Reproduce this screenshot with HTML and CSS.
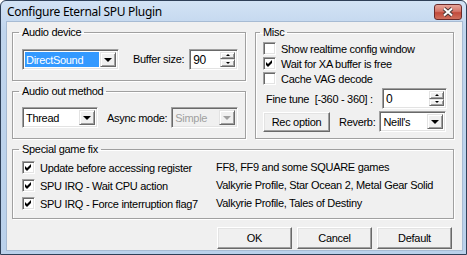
FILE: index.html
```html
<!DOCTYPE html>
<html lang="en">
<head>
    <meta charset="UTF-8">
    <title>Configure Eternal SPU Plugin</title>
    <link rel="stylesheet" href="styles.css">
</head>
<body>

<div class="window">
    <div class="titlebar">
        <span class="title">Configure Eternal SPU Plugin</span>
        <div class="close-btn">
            <svg width="14" height="10" viewBox="0 0 14 10">
                <path d="M3 1.5 L11 8.5 M11 1.5 L3 8.5" stroke="#4a3a3a" stroke-width="4"/>
                <path d="M3 1.5 L11 8.5 M11 1.5 L3 8.5" stroke="#fff" stroke-width="2"/>
            </svg>
        </div>
    </div>
    <div class="client">
        <div class="top">
            <div class="left-col">
                <fieldset class="group audio-device">
                    <legend>Audio device</legend>
                    <div class="row">
                        <div class="combo device-combo">
                            <span class="combo-text selected">DirectSound</span>
                            <span class="drop-btn"><i class="arrow"></i></span>
                        </div>
                        <span class="label buffer-label">Buffer size:</span>
                        <div class="edit buffer-edit">
                            <span class="edit-text">90</span>
                            <span class="spin">
                                <span class="spin-btn"><i class="up"></i></span>
                                <span class="spin-btn"><i class="down"></i></span>
                            </span>
                        </div>
                    </div>
                </fieldset>
                <fieldset class="group audio-out">
                    <legend>Audio out method</legend>
                    <div class="row">
                        <div class="combo thread-combo">
                            <span class="combo-text">Thread</span>
                            <span class="drop-btn"><i class="arrow"></i></span>
                        </div>
                        <span class="label async-label">Async mode:</span>
                        <div class="combo async-combo disabled">
                            <span class="combo-text">Simple</span>
                            <span class="drop-btn"><i class="arrow"></i></span>
                        </div>
                    </div>
                </fieldset>
            </div>
            <fieldset class="group misc">
                <legend>Misc</legend>
                <div class="check-row"><span class="check"></span>Show realtime config window</div>
                <div class="check-row"><span class="check checked"><svg width="7" height="7" viewBox="0 0 7 7"><path d="M0 2 L2 4 L6 0 L6 3 L2 7 L0 5 Z"/></svg></span>Wait for XA buffer is free</div>
                <div class="check-row"><span class="check"></span>Cache VAG decode</div>
                <div class="row tune-row">
                    <span class="label tune-label">Fine tune&nbsp; [-360 - 360] :</span>
                    <div class="edit tune-edit">
                        <span class="edit-text">0</span>
                        <span class="spin">
                            <span class="spin-btn"><i class="up"></i></span>
                            <span class="spin-btn"><i class="down"></i></span>
                        </span>
                    </div>
                </div>
                <div class="row rec-row">
                    <div class="btn rec-btn">Rec option</div>
                    <span class="label reverb-label">Reverb:</span>
                    <div class="combo reverb-combo">
                        <span class="combo-text">Neill's</span>
                        <span class="drop-btn"><i class="arrow"></i></span>
                    </div>
                </div>
            </fieldset>
        </div>
        <fieldset class="group special">
            <legend>Special game fix</legend>
            <div class="fix-grid">
                <div class="check-row"><span class="check checked"><svg width="7" height="7" viewBox="0 0 7 7"><path d="M0 2 L2 4 L6 0 L6 3 L2 7 L0 5 Z"/></svg></span>Update before accessing register</div>
                <div class="games">FF8, FF9 and some SQUARE games</div>
                <div class="check-row"><span class="check checked"><svg width="7" height="7" viewBox="0 0 7 7"><path d="M0 2 L2 4 L6 0 L6 3 L2 7 L0 5 Z"/></svg></span>SPU IRQ - Wait CPU action</div>
                <div class="games">Valkyrie Profile, Star Ocean 2, Metal Gear Solid</div>
                <div class="check-row"><span class="check checked"><svg width="7" height="7" viewBox="0 0 7 7"><path d="M0 2 L2 4 L6 0 L6 3 L2 7 L0 5 Z"/></svg></span>SPU IRQ - Force interruption flag7</div>
                <div class="games">Valkyrie Profile, Tales of Destiny</div>
            </div>
        </fieldset>
        <div class="buttons">
            <div class="btn">OK</div>
            <div class="btn">Cancel</div>
            <div class="btn">Default</div>
        </div>
    </div>
</div>

</body>
</html>
```

FILE: styles.css
```css
body {
    margin: 0;
    font-family: "Liberation Sans", Arial, sans-serif;
    font-size: 11px;
    letter-spacing: -0.3px;
    color: #000;
}
.window {
    width: 467px;
    height: 255px;
    box-sizing: border-box;
    border: 1px solid #2f4058;
    border-radius: 6px 6px 0 0;
    background: linear-gradient(#d3e3f5, #c0d5ed 30px, #bad1eb);
    padding: 0 3px 3px 5px;
    display: flex;
    flex-direction: column;
    overflow: hidden;
}
.titlebar {
    height: 20px;
    display: flex;
    align-items: center;
    justify-content: space-between;
    flex-shrink: 0;
}
.title {
    font-family: "Noto Sans", sans-serif;
    font-size: 12px;
    letter-spacing: -0.3px;
    padding-left: 1px;
    padding-top: 1px;
}
.close-btn {
    width: 26px;
    height: 14px;
    margin-right: 1px;
    margin-top: 2px;
    border: 1px solid #6b2a2a;
    border-radius: 3px;
    background: linear-gradient(#e7a499, #d5766a 45%, #c24a3c 55%, #d0705e);
    display: flex;
    align-items: center;
    justify-content: center;
}
.client {
    flex: 1;
    background: #f0f0f0;
    border: 1px solid #a7bbd3;
    padding: 4px 8px 0 5px;
}
.top {
    display: flex;
    gap: 9px;
}
.left-col {
    width: 234px;
    display: flex;
    flex-direction: column;
    gap: 4px;
}
fieldset.group {
    margin: 0;
    border: 1px solid #a0a0a0;
    box-shadow: inset 1px 1px #fff, 1px 1px #fff;
    padding: 9px 6px 10px 9px;
    min-width: 0;
}
legend {
    padding: 0 3px;
    margin-left: -3px;
    line-height: 13px;
}
.row {
    display: flex;
    align-items: center;
}
.label {
    white-space: nowrap;
}

/* sunken controls */
.combo, .edit {
    height: 21px;
    box-sizing: border-box;
    border: 1px solid;
    border-color: #a0a0a0 #fff #fff #a0a0a0;
    box-shadow: inset 1px 1px #696969, inset -1px -1px #e3e3e3;
    background: #fff;
    padding: 2px;
    display: flex;
}
.combo-text {
    flex: 1;
    padding-left: 1px;
    line-height: 17px;
}
.combo-text.selected {
    background: #3399ff;
    color: #fff;
    margin-right: 1px;
}
.drop-btn, .spin-btn {
    box-sizing: border-box;
    border: 1px solid;
    border-color: #e3e3e3 #696969 #696969 #e3e3e3;
    box-shadow: inset 1px 1px #fff, inset -1px -1px #a0a0a0;
    background: #f0f0f0;
    display: flex;
    align-items: center;
    justify-content: center;
}
.drop-btn {
    width: 16px;
}
.arrow {
    width: 0;
    height: 0;
    border-left: 4px solid transparent;
    border-right: 4px solid transparent;
    border-top: 4px solid #000;
    margin-top: 1px;
}
.disabled {
    background: #f0f0f0;
    color: #a0a0a0;
}
.disabled .arrow {
    border-top-color: #a0a0a0;
}
.edit-text {
    flex: 1;
    line-height: 17px;
    padding-left: 1px;
    font-size: 12px;
}
.spin {
    width: 15px;
    display: flex;
    flex-direction: column;
}
.spin-btn {
    flex: 1;
}
.up, .down {
    width: 0;
    height: 0;
    border-left: 2px solid transparent;
    border-right: 2px solid transparent;
}
.up {
    border-bottom: 2px solid #000;
}
.down {
    border-top: 2px solid #000;
}

.device-combo {
    width: 97px;
    margin-top: 1px;
}
.buffer-label {
    margin-left: 14px;
}
.buffer-edit {
    width: 49px;
    margin-left: 5px;
}
.thread-combo {
    width: 76px;
}
.async-label {
    margin-left: 9px;
}
.async-combo {
    width: 67px;
    margin-left: 4px;
}

/* checkboxes */
.check-row {
    display: flex;
    align-items: center;
    height: 15px;
    white-space: nowrap;
}
.check {
    width: 13px;
    height: 13px;
    box-sizing: border-box;
    border: 1px solid;
    border-color: #a0a0a0 #fff #fff #a0a0a0;
    box-shadow: inset 1px 1px #696969, inset -1px -1px #e3e3e3;
    background: #fff;
    margin-right: 5px;
    display: flex;
    align-items: center;
    justify-content: center;
    flex-shrink: 0;
}

fieldset.misc {
    flex: 1;
    padding: 2px 6px 5px 7px;
}
.tune-row {
    margin-top: 2px;
    justify-content: space-between;
    padding-left: 3px;
}
.tune-edit {
    width: 65px;
}
.rec-row {
    margin-top: 2px;
}
.btn {
    box-sizing: border-box;
    border: 1px solid;
    border-color: #fff #696969 #696969 #fff;
    box-shadow: inset -1px -1px #a0a0a0, inset 1px 1px #e3e3e3;
    background: #f0f0f0;
    display: flex;
    align-items: center;
    justify-content: center;
}
.rec-btn {
    width: 67px;
    height: 20px;
}
.reverb-label {
    margin-left: 9px;
}
.reverb-combo {
    width: 67px;
    margin-left: 4px;
}

fieldset.special {
    margin-top: 4px;
    padding-top: 4px;
    padding-bottom: 7px;
}
.fix-grid {
    display: grid;
    grid-template-columns: 194px 1fr;
    row-gap: 3px;
}
.games {
    line-height: 15px;
    white-space: nowrap;
}
.buttons {
    display: flex;
    justify-content: flex-end;
    gap: 5px;
    margin-top: 8px;
    padding-right: 2px;
}
.buttons .btn {
    width: 75px;
    height: 22px;
}
```
